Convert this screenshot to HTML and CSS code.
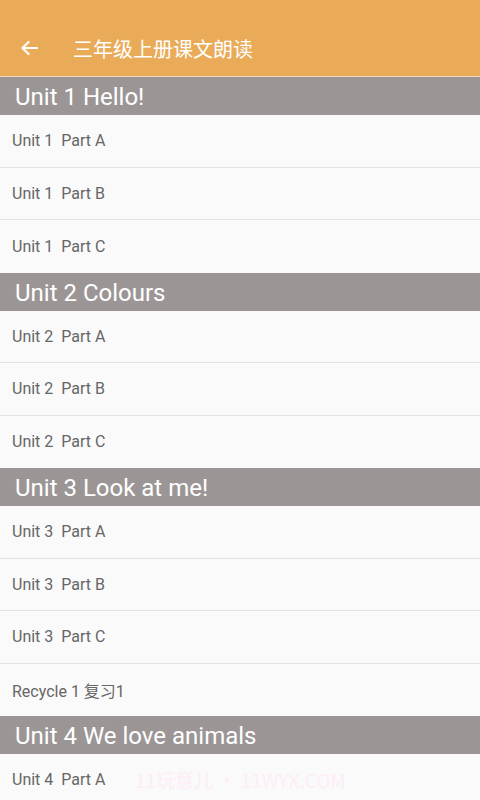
FILE: index.html
```html
<!DOCTYPE html>
<html>

<head>
    <meta charset="UTF-8">
    <title>三年级上册课文朗读</title>
    <link rel="stylesheet" href="styles.css">
</head>

<body>
    <div class="topbar">
        <svg class="back" width="18" height="16" viewBox="0 0 18 16">
            <path d="M17 8H2.5M8.5 2L2.5 8l6 6" fill="none" stroke="#fff" stroke-width="2.2" stroke-linecap="round" stroke-linejoin="round"/>
        </svg>
        <span class="title">三年级上册课文朗读</span>
    </div>

    <div class="list">
        <div class="unit">Unit 1 Hello!</div>
        <div class="row">Unit 1&nbsp; Part A</div>
        <div class="row">Unit 1&nbsp; Part B</div>
        <div class="row last">Unit 1&nbsp; Part C</div>

        <div class="unit">Unit 2 Colours</div>
        <div class="row">Unit 2&nbsp; Part A</div>
        <div class="row">Unit 2&nbsp; Part B</div>
        <div class="row last">Unit 2&nbsp; Part C</div>

        <div class="unit">Unit 3 Look at me!</div>
        <div class="row">Unit 3&nbsp; Part A</div>
        <div class="row">Unit 3&nbsp; Part B</div>
        <div class="row">Unit 3&nbsp; Part C</div>
        <div class="row last">Recycle 1 复习1</div>

        <div class="unit">Unit 4 We love animals</div>
        <div class="row">Unit 4&nbsp; Part A</div>
    </div>

    <div class="mark">11玩意儿 • 11WYX.COM</div>
</body>

</html>
```

FILE: styles.css
```css
* {box-sizing: border-box;}

body {
    margin: 0;
    width: 480px;
    height: 800px;
    overflow: hidden;
    background-color: #fafafa;
    font-family: Roboto, "Noto Sans CJK SC", sans-serif;
}

/* 상단바 */
.topbar {
    height: 77px;
    background-color: #eaab58;
    border-bottom: 1px solid #eedcc2;
    display: flex;
    align-items: center;
    padding: 20px 0 0 20px;
}
.topbar .back {margin-right: 35px;}
.topbar .title {
    color: #fff;
    font-size: 20px;
    font-family: "Noto Sans CJK SC", sans-serif;
}

/* 단원 제목 */
.unit {
    height: 38px;
    background-color: #9b9695;
    color: #fff;
    font-size: 24px;
    line-height: 40px;
    padding-left: 15px;
}

/* 항목 */
.row {
    height: 52.5px;
    border-bottom: 1px solid #e2e2e2;
    color: #666;
    font-size: 16px;
    display: flex;
    align-items: center;
    padding-left: 12px;
}
.row.last {border-bottom: none;}

/* 워터마크 */
.mark {
    position: absolute;
    left: 135px;
    top: 766px;
    color: #fdedf8;
    font-size: 19px;
    font-family: "Noto Sans CJK SC", sans-serif;
}
```
